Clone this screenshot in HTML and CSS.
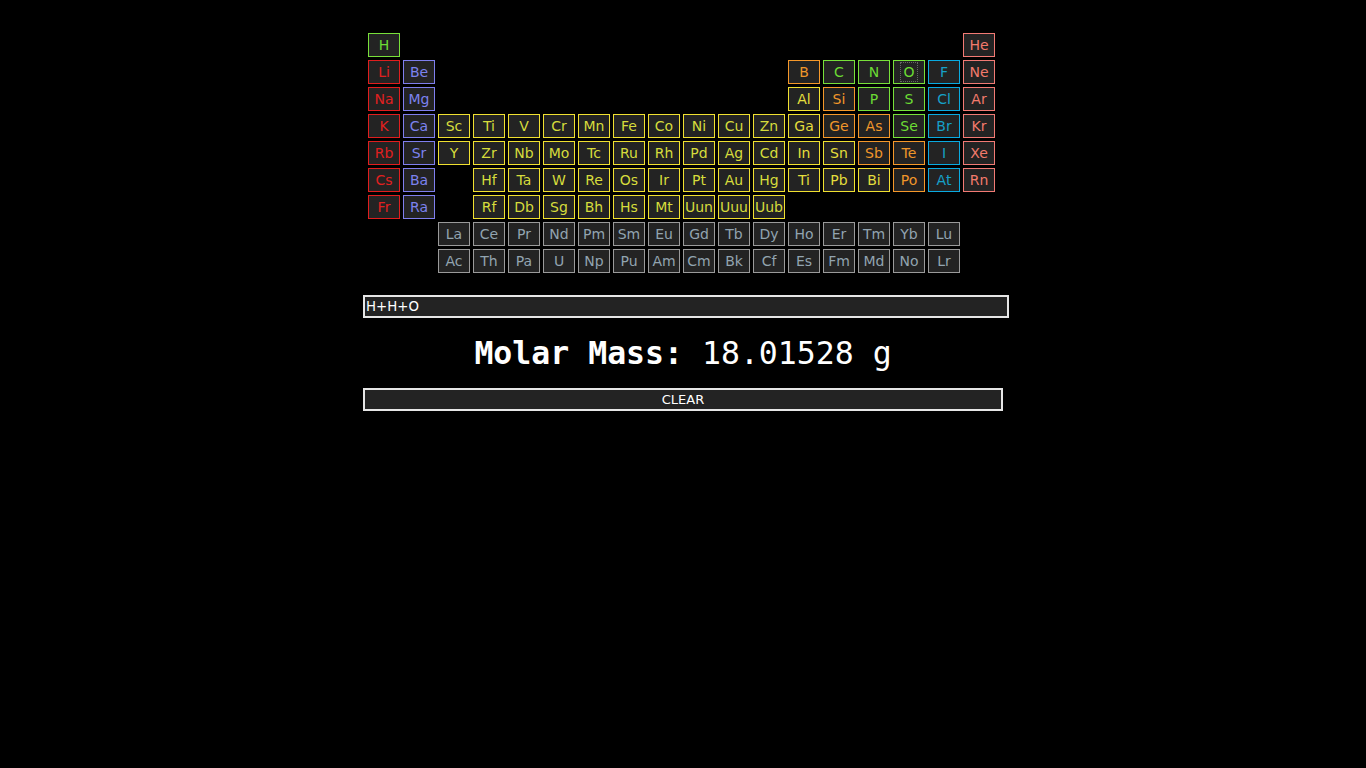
FILE: index.html
```html
<!DOCTYPE html>
<html>
<head>
<meta charset="utf-8">
<title>Molar Mass Calculator</title>
<link rel="stylesheet" href="styles.css">
</head>
<body>
<div class="wrap">
  <div class="table">
    <div class="el nm c1">H</div><div class="el ng c18">He</div>
    <div class="el am c1">Li</div><div class="el ae">Be</div><div class="el md c13">B</div><div class="el nm">C</div><div class="el nm">N</div><div class="el nm focus">O</div><div class="el ha">F</div><div class="el ng">Ne</div>
    <div class="el am c1">Na</div><div class="el ae">Mg</div><div class="el pm c13">Al</div><div class="el md">Si</div><div class="el nm">P</div><div class="el nm">S</div><div class="el ha">Cl</div><div class="el ng">Ar</div>
    <div class="el am">K</div><div class="el ae">Ca</div><div class="el tm">Sc</div><div class="el tm">Ti</div><div class="el tm">V</div><div class="el tm">Cr</div><div class="el tm">Mn</div><div class="el tm">Fe</div><div class="el tm">Co</div><div class="el tm">Ni</div><div class="el tm">Cu</div><div class="el tm">Zn</div><div class="el pm">Ga</div><div class="el md">Ge</div><div class="el md">As</div><div class="el nm">Se</div><div class="el ha">Br</div><div class="el ng">Kr</div>
    <div class="el am">Rb</div><div class="el ae">Sr</div><div class="el tm">Y</div><div class="el tm">Zr</div><div class="el tm">Nb</div><div class="el tm">Mo</div><div class="el tm">Tc</div><div class="el tm">Ru</div><div class="el tm">Rh</div><div class="el tm">Pd</div><div class="el tm">Ag</div><div class="el tm">Cd</div><div class="el pm">In</div><div class="el pm">Sn</div><div class="el md">Sb</div><div class="el md">Te</div><div class="el ha">I</div><div class="el ng">Xe</div>
    <div class="el am">Cs</div><div class="el ae">Ba</div><div class="el tm c4">Hf</div><div class="el tm">Ta</div><div class="el tm">W</div><div class="el tm">Re</div><div class="el tm">Os</div><div class="el tm">Ir</div><div class="el tm">Pt</div><div class="el tm">Au</div><div class="el tm">Hg</div><div class="el pm">Ti</div><div class="el pm">Pb</div><div class="el pm">Bi</div><div class="el md">Po</div><div class="el ha">At</div><div class="el ng">Rn</div>
    <div class="el am c1">Fr</div><div class="el ae">Ra</div><div class="el tm c4">Rf</div><div class="el tm">Db</div><div class="el tm">Sg</div><div class="el tm">Bh</div><div class="el tm">Hs</div><div class="el tm">Mt</div><div class="el tm">Uun</div><div class="el tm">Uuu</div><div class="el tm">Uub</div>
    <div class="el ln c3">La</div><div class="el ln">Ce</div><div class="el ln">Pr</div><div class="el ln">Nd</div><div class="el ln">Pm</div><div class="el ln">Sm</div><div class="el ln">Eu</div><div class="el ln">Gd</div><div class="el ln">Tb</div><div class="el ln">Dy</div><div class="el ln">Ho</div><div class="el ln">Er</div><div class="el ln">Tm</div><div class="el ln">Yb</div><div class="el ln">Lu</div>
    <div class="el ln c3">Ac</div><div class="el ln">Th</div><div class="el ln">Pa</div><div class="el ln">U</div><div class="el ln">Np</div><div class="el ln">Pu</div><div class="el ln">Am</div><div class="el ln">Cm</div><div class="el ln">Bk</div><div class="el ln">Cf</div><div class="el ln">Es</div><div class="el ln">Fm</div><div class="el ln">Md</div><div class="el ln">No</div><div class="el ln">Lr</div>
  </div>
  <input class="formula" type="text" value="H+H+O">
  <div class="result"><b>Molar Mass:</b> 18.01528 g</div>
  <button class="clear" type="button">CLEAR</button>
</div>
</body>
</html>
```
FILE: styles.css
```css
html, body {
  margin: 0;
  padding: 0;
  background: #000;
  color: #fff;
}
.wrap {
  width: 640px;
  margin: 0 auto;
  display: flex;
  flex-direction: column;
  align-items: flex-start;
}
.table {
  display: grid;
  grid-template-columns: repeat(18, 32px);
  grid-auto-rows: 24px;
  gap: 3px;
  padding: 33px 0 0 5px;
}
.el {
  box-sizing: border-box;
  border: 1px solid;
  background: #232323;
  font-family: "DejaVu Sans", sans-serif;
  font-size: 14px;
  line-height: 22px;
  text-align: center;
  white-space: nowrap;
  overflow: hidden;
}
.c1 { grid-column: 1; }
.c3 { grid-column: 3; }
.c4 { grid-column: 4; }
.c13 { grid-column: 13; }
.c18 { grid-column: 18; }
.nm { border-color: #78e03a; color: #6cdc34; }
.ng { border-color: #f27a74; color: #f27a6c; }
.am { border-color: #e01e1e; color: #e02020; }
.ae { border-color: #7f7fee; color: #7c82ee; }
.tm { border-color: #f0e030; color: #d6dc3c; }
.pm { border-color: #f0e030; color: #e4de3c; }
.md { border-color: #f5982a; color: #f0962a; }
.ha { border-color: #0aaae0; color: #16a0c8; }
.ln { border-color: #9a9a9a; color: #92a4b0; }
.focus { position: relative; }
.focus::after {
  content: "";
  position: absolute;
  left: 6px; right: 6px; top: 1px; bottom: 1px;
  border: 1px dotted #666;
}
.formula {
  box-sizing: border-box;
  width: 646px;
  height: 23px;
  margin: 22px 0 0 0;
  padding: 0 1px;
  border: 2px solid #e6e6e6;
  background: #232323;
  color: #fff;
  font-family: "DejaVu Sans", sans-serif;
  font-size: 13.33px;
  outline: none;
}
.result {
  align-self: center;
  margin-top: 17px;
  font-family: "DejaVu Sans Mono", monospace;
  font-size: 31.5px;
  line-height: 37px;
  color: #fff;
  white-space: pre;
}
.result b { font-weight: bold; }
.clear {
  box-sizing: border-box;
  width: 640px;
  height: 23px;
  margin-top: 16px;
  padding: 0;
  border: 2px solid #e6e6e6;
  background: #232323;
  color: #fff;
  font-family: "DejaVu Sans", sans-serif;
  font-size: 13px;
}
```
